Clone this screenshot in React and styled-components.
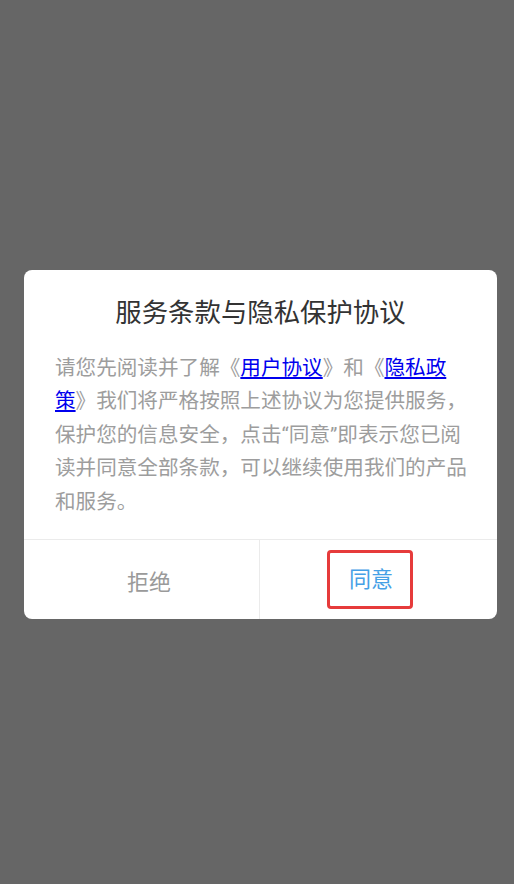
import styled, { createGlobalStyle } from "styled-components"

const GlobalStyle = createGlobalStyle`
  html, body {
    margin: 0;
    padding: 0;
    background: #666666;
  }
  body {
    font-family: Roboto, "Noto Sans CJK SC", sans-serif;
  }
`

const Overlay = styled.div`
  min-height: 884px;
  display: flex;
  flex-direction: column;
  justify-content: center;
  padding: 5px 0 0 24px;
  box-sizing: border-box;
`

const Dialog = styled.div`
  width: 473px;
  background: #ffffff;
  border-radius: 8px;
  overflow: hidden;
`

const Title = styled.h2`
  margin: 0;
  padding-top: 25px;
  font-size: 26.4px;
  line-height: 36px;
  font-weight: 400;
  color: #333333;
  text-align: center;
`

const Content = styled.p`
  margin: 21px 28px 20px 31px;
  font-size: 20.6px;
  line-height: 33.5px;
  color: #9d9d9d;
`

const Link = styled.a`
  color: #0000ee;
  text-decoration: underline;
`

const Footer = styled.div`
  display: flex;
  border-top: 1px solid #ebebeb;
  height: 79px;
`

const Button = styled.div`
  flex: 1;
  display: flex;
  align-items: center;
  justify-content: center;
  font-size: 22px;
  color: ${props => props.primary ? "#45a0e6" : "#9a9a9a"};
  padding-left: ${props => props.primary ? "0" : "15px"};
  padding-right: ${props => props.primary ? "17px" : "0"};
  border-left: ${props => props.primary ? "1px solid #ebebeb" : "none"};
`

const Highlight = styled.span`
  display: block;
  border: 3px solid #e63b3b;
  border-radius: 4px;
  padding: 12px 17px 11px 19px;
  line-height: 30px;
`

const App = () => {
  return (
    <>
      <GlobalStyle />
      <Overlay>
        <Dialog>
          <Title>服务条款与隐私保护协议</Title>
          <Content>
            请您先阅读并了解《<Link href="#">用户协议</Link>》和《<Link href="#">隐私政策</Link>》我们将严格按照上述协议为您提供服务，保护您的信息安全，点击“同意”即表示您已阅读并同意全部条款，可以继续使用我们的产品和服务。
          </Content>
          <Footer>
            <Button>拒绝</Button>
            <Button primary>
              <Highlight>同意</Highlight>
            </Button>
          </Footer>
        </Dialog>
      </Overlay>
    </>
  )
}

export default App
